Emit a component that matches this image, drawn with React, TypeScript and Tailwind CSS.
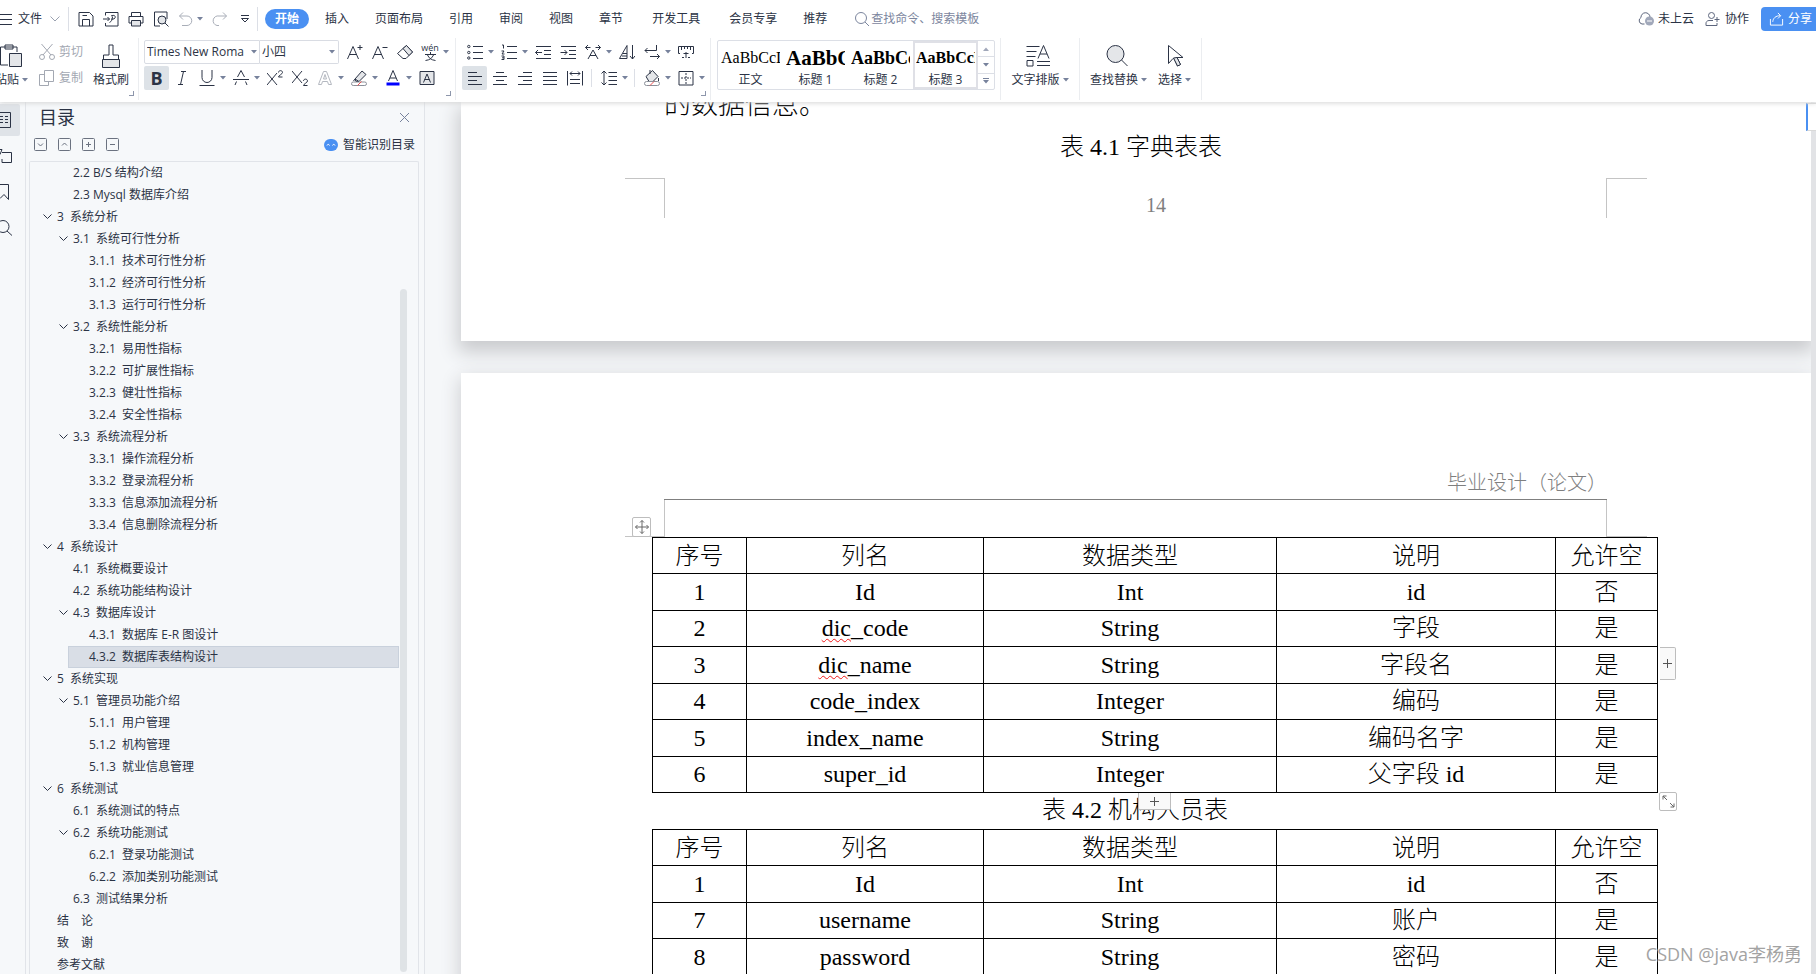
import type { ReactNode } from "react";
import clsx from "clsx";

type IconProps = { children: ReactNode; size?: string; box?: string; className?: string };

function Icon({ children, size = "size-4", box = "0 0 16 16", className }: IconProps) {
  return (
    <svg
      viewBox={box}
      fill="none"
      stroke="currentColor"
      strokeWidth="1"
      className={clsx("shrink-0", size, className)}
    >
      {children}
    </svg>
  );
}

function Caret() {
  return (
    <svg viewBox="0 0 6 4" className="w-[6px] h-[4px] shrink-0 fill-[#77829c]">
      <path d="M0 0h6L3 3.6z" />
    </svg>
  );
}

type ToolProps = { label: string; split?: boolean; active?: boolean; children: ReactNode };

function Tool({ label, split, active, children }: ToolProps) {
  return (
    <button
      aria-label={label}
      className={clsx(
        "h-6 flex items-center shrink-0 rounded-xs",
        split ? "w-[34px] pl-[5px] gap-[5px]" : "w-[25px] justify-center",
        active && "bg-[#dde2e7]"
      )}
    >
      {children}
      {split && <Caret />}
    </button>
  );
}

function Corner() {
  return (
    <span className="absolute right-1 bottom-1 size-[5px] border-r border-b border-[#8d96ab]" />
  );
}

const tabs = [
  { name: "插入" },
  { name: "页面布局" },
  { name: "引用" },
  { name: "审阅" },
  { name: "视图" },
  { name: "章节" },
  { name: "开发工具", wide: true },
  { name: "会员专享" },
  { name: "推荐" },
];

const styles = [
  { sample: "AaBbCcD", name: "正文", font: "text-base" },
  { sample: "AaBbC", name: "标题 1", font: "text-[21px] font-bold" },
  { sample: "AaBbCc", name: "标题 2", font: "text-lg font-bold" },
  { sample: "AaBbCcD", name: "标题 3", font: "text-base font-bold", selected: true },
];

const outline = [
  { level: 2, text: "2.2 B/S 结构介绍" },
  { level: 2, text: "2.3 Mysql 数据库介绍" },
  { level: 1, text: "3  系统分析", open: true },
  { level: 2, text: "3.1  系统可行性分析", open: true },
  { level: 3, text: "3.1.1  技术可行性分析" },
  { level: 3, text: "3.1.2  经济可行性分析" },
  { level: 3, text: "3.1.3  运行可行性分析" },
  { level: 2, text: "3.2  系统性能分析", open: true },
  { level: 3, text: "3.2.1  易用性指标" },
  { level: 3, text: "3.2.2  可扩展性指标" },
  { level: 3, text: "3.2.3  健壮性指标" },
  { level: 3, text: "3.2.4  安全性指标" },
  { level: 2, text: "3.3  系统流程分析", open: true },
  { level: 3, text: "3.3.1  操作流程分析" },
  { level: 3, text: "3.3.2  登录流程分析" },
  { level: 3, text: "3.3.3  信息添加流程分析" },
  { level: 3, text: "3.3.4  信息删除流程分析" },
  { level: 1, text: "4  系统设计", open: true },
  { level: 2, text: "4.1  系统概要设计" },
  { level: 2, text: "4.2  系统功能结构设计" },
  { level: 2, text: "4.3  数据库设计", open: true },
  { level: 3, text: "4.3.1  数据库 E-R 图设计" },
  { level: 3, text: "4.3.2  数据库表结构设计", selected: true },
  { level: 1, text: "5  系统实现", open: true },
  { level: 2, text: "5.1  管理员功能介绍", open: true },
  { level: 3, text: "5.1.1  用户管理" },
  { level: 3, text: "5.1.2  机构管理" },
  { level: 3, text: "5.1.3  就业信息管理" },
  { level: 1, text: "6  系统测试", open: true },
  { level: 2, text: "6.1  系统测试的特点" },
  { level: 2, text: "6.2  系统功能测试", open: true },
  { level: 3, text: "6.2.1  登录功能测试" },
  { level: 3, text: "6.2.2  添加类别功能测试" },
  { level: 2, text: "6.3  测试结果分析" },
  { level: 1, text: "结　论" },
  { level: 1, text: "致　谢" },
  { level: 1, text: "参考文献" },
];

const columns = ["序号", "列名", "数据类型", "说明", "允许空"];

const dictRows = [
  ["1", "Id", "Int", "id", "否"],
  ["2", "dic_code", "String", "字段", "是"],
  ["3", "dic_name", "String", "字段名", "是"],
  ["4", "code_index", "Integer", "编码", "是"],
  ["5", "index_name", "String", "编码名字", "是"],
  ["6", "super_id", "Integer", "父字段 id", "是"],
];

const userRows = [
  ["1", "Id", "Int", "id", "否"],
  ["7", "username", "String", "账户", "是"],
  ["8", "password", "String", "密码", "是"],
];

function TopBar() {
  return (
    <div className="flex items-center h-[38px] pb-1 pt-1">
      <button className="flex items-center h-6">
        <Icon size="w-3 h-4" box="0 0 12 16">
          <path d="M0 3.5h12M0 8.5h12M0 13.5h12" />
        </Icon>
        <span className="ml-[6px]">文件</span>
        <Icon size="w-[10px] h-[6px]" box="0 0 10 6" className="ml-2 text-[#9aa1b0]">
          <path d="M.5.5 5 5 9.5.5" />
        </Icon>
      </button>
      <span className="w-px h-6 bg-[#dcdfe6] ml-2" />
      <div className="flex items-center ml-[9px] gap-[9px]">
        <button aria-label="保存">
          <Icon>
            <path d="M1 1.500h10.500l3.500 3.500v10H1zM4.500 15V8.500h7V15M4.500 4.500H9" />
          </Icon>
        </button>
        <button aria-label="输出为PDF">
          <Icon>
            <path d="M2.500 4.500v-3h12.500v13.500H2.500v-3M0 8h6.500M4.500 6l2 2-2 2M8 5c3-1.500 5 0 4 2-1 1.500-3 1-4 1M9.500 5.500c0 3-1 5-3 6" />
          </Icon>
        </button>
        <button aria-label="打印">
          <Icon>
            <path d="M3.500 5V1.500h9V5M3.500 12H1V5.500h14V12h-2.500" />
            <path d="M3.500 9.500h9V15h-9z" fill="#e4e6e9" />
          </Icon>
        </button>
        <button aria-label="打印预览">
          <Icon>
            <path d="M7 15H1.500V1H14v7" />
            <circle cx="9" cy="9" r="4" fill="#e4e6e9" />
            <path d="m12 12 3.500 3.500" />
          </Icon>
        </button>
        <button aria-label="撤销" className="flex items-center gap-[3px] text-[#a9aeb8]">
          <Icon>
            <path d="M5 1.500 1.500 5 5 8.500M1.500 5H9a4.500 4.500 0 0 1 0 9.500H4" />
          </Icon>
          <Caret />
        </button>
        <button aria-label="恢复" className="text-[#a9aeb8]">
          <Icon>
            <path d="M11 1.500 14.500 5 11 8.500M14.500 5H7a4.500 4.500 0 0 0-2 9.500h2" />
          </Icon>
        </button>
        <button aria-label="自定义快速访问工具栏" className="ml-1">
          <Icon size="w-2 h-2" box="0 0 8 8">
            <path d="M0 .5h8M.5 3.500 4 7l3.500-3.500z" />
          </Icon>
        </button>
      </div>
      <span className="w-px h-6 bg-[#dcdfe6] ml-2" />
      <nav className="flex items-center ml-[7px]">
        <button className="h-5 px-[10px] mr-[3px] rounded-full bg-[#4a90f2] text-white font-bold">
          开始
        </button>
        {tabs.map((tab) => (
          <button key={tab.name} className={tab.wide ? "px-4" : "px-[13px]"}>
            {tab.name}
          </button>
        ))}
      </nav>
      <label className="flex items-center ml-[14px] gap-px text-[#7c869e]">
        <Icon>
          <circle cx="7" cy="7" r="5.500" />
          <path d="m11 11 4 4" />
        </Icon>
        <input
          placeholder="查找命令、搜索模板"
          className="w-32 outline-none placeholder:text-[#7c869e]"
        />
      </label>
      <div className="ml-auto flex items-center shrink-0">
        <button className="flex items-center gap-1">
          <Icon className="text-[#5d667d]">
            <path d="M6.500 13H4A3.500 3.500 0 0 1 3 6.500 4.500 4.500 0 0 1 12 6" />
            <circle cx="11.500" cy="10" r="4.500" fill="#a1a8ba" stroke="none" />
            <path d="M9 10h5" stroke="#fff" />
          </Icon>
          未上云
        </button>
        <button className="flex items-center gap-1 ml-[11px]">
          <Icon className="text-[#5d667d]">
            <circle cx="6.500" cy="4.500" r="3" />
            <path d="M8 9.500H4A3 3 0 0 0 1 13v1.500h11V12M9.500 8.500h5M12 6v5" />
          </Icon>
          协作
        </button>
        <button className="flex items-center gap-1 ml-3 h-6 pl-2 w-[55px] rounded-l bg-[#4a90f2] text-white">
          <Icon className="w-[15px]">
            <path d="M1.500 8v6.500h13V8M4 11c.5-4 3-6.500 8-6.500M9.500 1.500l3 3-3 3" />
          </Icon>
          <span className="whitespace-nowrap">分享</span>
        </button>
      </div>
    </div>
  );
}

function ClipboardGroup() {
  return (
    <div className="relative flex w-[139px] shrink-0">
      <button className="flex flex-col justify-between w-7 pt-1 pb-[2px]">
        <Icon size="w-[22px] h-6" box="0 0 22 24">
          <path d="M8 21H.5V3H17v5M5 1h8v4H5z" />
          <path d="M9.500 9.500h12v13h-12z" fill="#e4e6e9" />
        </Icon>
        <span className="flex items-center gap-[3px] -ml-[5px] whitespace-nowrap">
          粘贴
          <Caret />
        </span>
      </button>
      <div className="flex flex-col gap-[2px] ml-[11px] text-[#a3a8b2]">
        <button className="flex items-center gap-1 h-6">
          <Icon>
            <path d="M2.500 0 12 11M13.500 0 4 11" />
            <circle cx="3" cy="13" r="2.500" />
            <circle cx="13" cy="13" r="2.500" />
          </Icon>
          剪切
        </button>
        <button className="flex items-center gap-1 h-6">
          <Icon>
            <path d="M5.500.5h9v11h-9zM5.500 4.500h-5v11h9v-4" />
          </Icon>
          复制
        </button>
      </div>
      <button className="flex flex-col items-center justify-between ml-[10px] pt-1 pb-[2px]">
        <Icon size="w-5 h-6" box="0 0 20 24">
          <path d="M8 11V1h4v10h5.500v4.500h-15V11z" />
          <path d="M1.500 15.500h17v8h-17z" fill="#e4e6e9" />
        </Icon>
        格式刷
      </button>
      <Corner />
    </div>
  );
}

function FontGroup() {
  return (
    <div className="relative w-[317px] shrink-0 pl-[5px] flex flex-col gap-[2px]">
      <div className="flex">
        <label className="flex items-center w-[116px] h-6 border border-[#d9dce3] rounded-l-xs">
          <select aria-label="字体" className="appearance-none w-[106px] pl-[2px] outline-none">
            <option>Times New Roma</option>
          </select>
          <Caret />
        </label>
        <label className="flex items-center w-[79px] h-6 border border-l-0 border-[#d9dce3] rounded-r-xs">
          <select aria-label="字号" className="appearance-none w-[69px] pl-[2px] outline-none">
            <option>小四</option>
          </select>
          <Caret />
        </label>
        <div className="flex ml-[3px]">
          <Tool label="增大字号">
            <Icon>
              <path d="M.5 15 6 2.500 11.500 15M2.500 10.500h7M10.500 3.500h5M13 1v5" />
            </Icon>
          </Tool>
          <Tool label="减小字号">
            <Icon>
              <path d="M.5 15 6 2.500 11.500 15M2.500 10.500h7M10.500 3.500h5" />
            </Icon>
          </Tool>
          <Tool label="清除格式">
            <Icon>
              <path d="m6 4.500 3.500-3 6 6.500-6.500 6.500H6L.5 9.500z" />
              <path d="m6 4.500 3.500-3 6 6.500-3.500 3.500z" fill="#e4e6e9" />
            </Icon>
          </Tool>
          <Tool label="拼音指南" split>
            <span className="flex flex-col items-center w-4 shrink-0">
              <span className="text-[9px] leading-[9px]">wén</span>
              <Icon size="w-[11px] h-[9px]" box="0 0 11 9">
                <path d="M0 2.500h11M5.500 0v2.500M2.500 3C4 6 6 8 10.500 8.500M8.500 3C7 6 5 8 .5 8.500" />
              </Icon>
            </span>
          </Tool>
        </div>
      </div>
      <div className="flex">
        <Tool label="加粗" active>
          <span className="text-lg font-bold">B</span>
        </Tool>
        <Tool label="倾斜">
          <Icon>
            <path d="M7 1.500h5M4 14.500h5M9.500 1.500l-3 13" />
          </Icon>
        </Tool>
        <Tool label="下划线" split>
          <Icon>
            <path d="M3 0v7.500a5 5 0 0 0 10 0V0M.5 15.500h15" />
          </Icon>
        </Tool>
        <Tool label="删除线" split>
          <Icon>
            <path d="M4.500 7 8 .5 11.500 7M0 9.500h16M3.500 11.500 2 15M12.500 11.500 14 15" />
          </Icon>
        </Tool>
        <Tool label="上标">
          <Icon>
            <path d="M0 3l10 12M10 3 0 15M11.500 2.500c0-2.500 4-2.500 4 0 0 1.500-4 3-4 4.500h4" />
          </Icon>
        </Tool>
        <Tool label="下标">
          <Icon>
            <path d="M0 1l10 12M10 1 0 13M11.500 11c0-2.500 4-2.500 4 0 0 1.500-4 3-4 4.500h4" />
          </Icon>
        </Tool>
        <Tool label="文字效果" split>
          <Icon className="text-[#b4b8c0]">
            <path d="M1.500 14.500 6.500 1.500h3l5 13h-3l-1-3h-5l-1 3zM6.500 9h3L8 4.500z" />
          </Icon>
        </Tool>
        <Tool label="突出显示" split>
          <Icon>
            <path d="m4 9 7-8 4 3.500-7 7H5zM4 9l4 2.500M2.500 11l1.500-2" fill="#e4e6e9" />
            <rect x=".5" y="12" width="15" height="3.500" rx="1.700" stroke="#8b909a" />
            <path d="m6.500 15.500 4-4" stroke="#f05050" />
          </Icon>
        </Tool>
        <Tool label="字体颜色" split>
          <Icon>
            <path d="M3.500 11 8 .5 12.500 11M5 8h6" />
            <path d="M1.500 14h13" stroke="#0000ff" strokeWidth="3" />
          </Icon>
        </Tool>
        <Tool label="字符底纹">
          <Icon>
            <path d="M1 1.500h14v13H1z" fill="#e4e6e9" />
            <path d="M4.500 12.500 8 4l3.500 8.500M5.500 9.500h5" />
          </Icon>
        </Tool>
      </div>
      <Corner />
    </div>
  );
}

function ParagraphGroup() {
  return (
    <div className="relative w-[255px] shrink-0 pl-[6px] flex flex-col gap-[2px]">
      <div className="flex">
        <Tool label="项目符号" split>
          <Icon>
            <circle cx="1.800" cy="2.500" r="1.200" />
            <circle cx="1.800" cy="8.500" r="1.200" />
            <circle cx="1.800" cy="14" r="1.200" />
            <path d="M6 2.500h10M6 8.500h10M6 14.500h10" />
          </Icon>
        </Tool>
        <Tool label="编号" split>
          <Icon>
            <path d="M6 2.500h10M6 8.500h10M6 14.500h10M1 1h1.500v3.500M.5 7H3l-2 3h2.500M.5 12H3v3.500H.5M1 13.800h2" />
          </Icon>
        </Tool>
        <Tool label="减少缩进量">
          <Icon>
            <path d="M1 2.500h15M9 6.500h7M9 10.500h7M1 14.500h15M.5 8.500H7M3 6 .5 8.500 3 11" />
          </Icon>
        </Tool>
        <Tool label="增加缩进量">
          <Icon>
            <path d="M1 2.500h15M9 6.500h7M9 10.500h7M1 14.500h15M.5 8.500H7M4.500 6 7 8.500 4.500 11" />
          </Icon>
        </Tool>
        <Tool label="中文版式" split>
          <Icon>
            <path d="M3 15 8 6l5 9M5 11.500h6M.5 3.500h5M3 1 .5 3.500 3 6M10.500 3.500h5M13 1l2.500 2.500L13 6" />
          </Icon>
        </Tool>
        <Tool label="排序">
          <Icon>
            <path d="M.5 14.500 8 1.500v13zM4 9.500h4M3 12h5M13.500 1v14M11 12l2.500 3 2.500-3" />
          </Icon>
        </Tool>
        <Tool label="换行" split>
          <Icon>
            <path d="M12.500 1v5.500H1M3.500 4 1 6.500 3.500 9M6 12.500h9.500M13 10l2.500 2.500L13 15" />
          </Icon>
        </Tool>
        <Tool label="标尺">
          <Icon>
            <path d="M2 9.500H.5v-7h15v7H14M3.500 2.500V6M6.500 2.500V5M9.500 2.500V5M12.500 2.500V6M4 13.500h2M10 13.500h2M8 8v6M5.500 9.500h5" />
          </Icon>
        </Tool>
      </div>
      <div className="flex items-center">
        <Tool label="左对齐" active>
          <Icon>
            <path d="M1 2.500h9M1 6.500h14M1 10.500h9M1 14.500h14" />
          </Icon>
        </Tool>
        <Tool label="居中">
          <Icon>
            <path d="M4 2.500h8M1 6.500h14M4 10.500h8M1 14.500h14" />
          </Icon>
        </Tool>
        <Tool label="右对齐">
          <Icon>
            <path d="M6 2.500h9M1 6.500h14M6 10.500h9M1 14.500h14" />
          </Icon>
        </Tool>
        <Tool label="两端对齐">
          <Icon>
            <path d="M1 2.500h14M1 6.500h14M1 10.500h14M1 14.500h14" />
          </Icon>
        </Tool>
        <Tool label="分散对齐">
          <Icon>
            <path d="M.5 1v14.500M15.500 1v14.500M3 3.500h10M5 1.500l-2 2 2 2M11 1.500l2 2-2 2M3 9.500h10M3 13.500h10" />
          </Icon>
        </Tool>
        <span className="w-px h-[18px] mx-1 bg-[#dcdfe6]" />
        <Tool label="行距" split>
          <Icon>
            <path d="M3 1v14M.5 3.500 3 1l2.500 2.500M.5 12.500 3 15l2.500-2.500M7.500 2.500H16M7.500 6.500H16M7.500 10.500H16M7.500 14.500H16" />
          </Icon>
        </Tool>
        <span className="w-px h-[18px] mx-1 bg-[#dcdfe6]" />
        <Tool label="底纹颜色" split>
          <Icon>
            <path d="M2 6.500 8.500.5l5.500 6-5 5H5z" fill="#e4e6e9" />
            <path d="M6 4V0M14.500 8v3" />
            <rect x=".5" y="11.500" width="15" height="4" rx="2" stroke="#8b909a" fill="#fff" />
            <path d="m6 15.500 4-4" stroke="#f05050" />
          </Icon>
        </Tool>
        <Tool label="边框" split>
          <Icon>
            <path d="M1 1.500h14v13.500H1z" />
            <path d="M8 3v11M3 8h10" strokeDasharray="2 1" />
          </Icon>
        </Tool>
      </div>
      <Corner />
    </div>
  );
}

function Ribbon() {
  return (
    <div className="flex h-16 divide-x divide-[#ebedf0] pb-[2px] *:pt-[2px] *:pb-[10px]">
      <ClipboardGroup />
      <FontGroup />
      <ParagraphGroup />
      <div className="shrink-0 pl-[6px] pr-[5px]">
        <div className="flex h-[50px] border border-[#dcdfe6] rounded-xs">
          {styles.map((style) => (
            <button
              key={style.name}
              className={clsx(
                "flex flex-col w-[65px] border-2 px-px",
                style.selected ? "border-[#dfe0e6]" : "border-transparent"
              )}
            >
              <span
                className={clsx(
                  "h-[29px] leading-[30px] w-full text-left overflow-hidden text-black font-['Liberation_Serif']",
                  style.font
                )}
              >
                {style.sample}
              </span>
              <span className="w-full text-center leading-[15px]">{style.name}</span>
            </button>
          ))}
          <div className="flex flex-col w-4 divide-y divide-[#dcdfe6] *:flex-1 *:flex *:items-center *:justify-center">
            <button aria-label="上一行">
              <svg viewBox="0 0 6 4" className="w-[6px] h-[4px] fill-[#a1a8ba]">
                <path d="M0 4h6L3 .4z" />
              </svg>
            </button>
            <button aria-label="下一行">
              <Caret />
            </button>
            <button aria-label="更多样式" className="flex-col gap-px">
              <span className="w-[6px] h-px bg-[#77829c]" />
              <Caret />
            </button>
          </div>
        </div>
      </div>
      <div className="shrink-0 w-[79px] flex justify-center">
        <button className="flex flex-col items-center justify-between pt-1 pb-[2px]">
          <Icon size="size-6" box="0 0 24 24" className="-ml-1">
            <path d="M.5 2.500h13M.5 7.500h10M.5 12.500h9M12 14.500l5.500-13 5.500 13M14 10h7M1 16.500h6v5.500H1zM11 17.500h13M11 21.500h13" />
          </Icon>
          <span className="flex items-center gap-[3px]">
            文字排版
            <Caret />
          </span>
        </button>
      </div>
      <div className="shrink-0 flex gap-[11px] pl-[10px] pr-[10px]">
        <button className="flex flex-col items-center justify-between pt-1 pb-[2px]">
          <Icon size="size-6" box="0 0 24 24" className="-ml-1">
            <circle cx="10.500" cy="10" r="8.500" fill="#e4e6e9" />
            <path d="m16.500 16 6 6" />
          </Icon>
          <span className="flex items-center gap-[3px]">
            查找替换
            <Caret />
          </span>
        </button>
        <button className="flex flex-col items-center justify-between pt-1 pb-[2px]">
          <Icon size="size-6" box="0 0 24 24">
            <path d="M5.500 1.500v18l4.500-5h1l3.500 7.500 3-1.500-3.500-7H20z" />
            <path d="m10.500 14 4 8 3-1.500-3.500-7z" fill="#e4e6e9" />
          </Icon>
          <span className="flex items-center gap-[3px]">
            选择
            <Caret />
          </span>
        </button>
      </div>
      <div />
    </div>
  );
}

function Sidebar() {
  return (
    <aside className="flex shrink-0 w-[425px] border-r border-[#e1e4e9] bg-[#f6f8fa]">
      <div className="w-[26px] shrink-0 border-r border-[#e1e4e9] pt-[2px] flex flex-col gap-1 *:h-8 *:w-5 *:flex *:items-center">
        <button aria-label="目录" className="bg-[#dfe3e8] rounded-r-xs">
          <Icon size="w-[11px] h-4" box="0 0 11 16">
            <path d="M0 .5h10.500v15H0M0 4.500h3M0 7.500h3M0 10.500h3M5 4.500h3M5 7.500h3M5 10.500h3" />
          </Icon>
        </button>
        <button aria-label="章节">
          <Icon size="w-3 h-4" box="0 0 12 16">
            <path d="M0 1.500h2l-2 5M2 4.500h9.500v10H2V11" />
          </Icon>
        </button>
        <button aria-label="书签">
          <Icon size="w-[10px] h-[18px]" box="0 0 10 18">
            <path d="M0 1.500h8.500v15L4 11.500l-4 4" />
          </Icon>
        </button>
        <button aria-label="查找">
          <Icon size="w-3 h-4" box="0 0 12 16">
            <circle cx="3" cy="6.500" r="6" />
            <path d="m7 11 5 4.500" />
          </Icon>
        </button>
      </div>
      <div className="flex-1 min-w-0 flex flex-col pl-[3px] pr-[5px]">
        <div className="flex items-center justify-between h-[30px] pl-[10px] pr-[10px]">
          <h2 className="text-lg">目录</h2>
          <button aria-label="关闭">
            <Icon size="size-[9px]" box="0 0 9 9" className="text-[#77829c]">
              <path d="m0 0 9 9M9 0 0 9" />
            </Icon>
          </button>
        </div>
        <div className="flex items-center h-[29px] pl-[5px] pr-1 pb-1 gap-[11px] text-[#6b7280]">
          {["M4 5.500 6.500 8 9 5.500", "M4 7.500 6.500 5 9 7.500", "M6.500 4v5M4 6.500h5", "M4 6.500h5"].map(
            (path, index) => (
              <button key={path} aria-label={["展开", "收起", "新增", "删除"][index]}>
                <Icon size="size-[13px]" box="0 0 13 13">
                  <rect x=".5" y=".5" width="12" height="12" rx="1" />
                  <path d={path} />
                </Icon>
              </button>
            )
          )}
          <a href="#" className="flex items-center gap-[5px] ml-auto text-[#2b3345]">
            <Icon size="w-[14px] h-3" box="0 0 14 12">
              <rect width="14" height="12" rx="6" fill="#4a90f2" stroke="none" />
              <path d="M3 6.500c.5-1.500 2-1.500 2.500 0M8.500 6.500c.5-1.500 2-1.500 2.500 0" stroke="#fff" />
            </Icon>
            智能识别目录
          </a>
        </div>
        <div className="flex-1 min-h-0 flex border border-b-0 border-[#e1e4e9] rounded-t-xs">
          <ul className="flex-1 overflow-hidden">
            {outline.map((item) => (
              <li
                key={item.text}
                className={clsx(
                  "flex items-center h-[22px] whitespace-pre",
                  item.level === 1 && "pl-[13px]",
                  item.level === 2 && "pl-[29px]",
                  item.level === 3 && !item.selected && "pl-[45px]",
                  item.selected && "ml-[38px] pl-[6px] border border-[#c9d1dc] bg-[#d9dee6]"
                )}
              >
                <span className="w-[14px] shrink-0">
                  {item.open && (
                    <Icon size="w-[9px] h-[6px]" box="0 0 9 6">
                      <path d="M.5.5l4 4 4-4" />
                    </Icon>
                  )}
                </span>
                {item.text}
              </li>
            ))}
          </ul>
          <div className="w-[19px] pt-[127px] pb-[2px] pl-px">
            <div className="w-[7px] h-full rounded-full bg-[#dfe3e6]" />
          </div>
        </div>
      </div>
    </aside>
  );
}

function CellText({ text }: { text: string }) {
  if (!text.startsWith("dic_")) return <>{text}</>;
  return (
    <>
      <span className="underline decoration-wavy decoration-[#f01818] decoration-1 underline-offset-2">
        dic
      </span>
      {text.slice(3)}
    </>
  );
}

function DataTable({ rows, height }: { rows: string[][]; height: string }) {
  return (
    <table
      className={clsx("w-full table-fixed border-collapse text-center leading-[30px]", height)}
    >
      <colgroup>
        <col className="w-[94px]" />
        <col className="w-[237px]" />
        <col />
        <col className="w-[279px]" />
        <col className="w-[102px]" />
      </colgroup>
      <thead>
        <tr className="h-9">
          {columns.map((column) => (
            <th key={column} className="border border-black p-0 font-light">
              {column}
            </th>
          ))}
        </tr>
      </thead>
      <tbody>
        {rows.map((row) => (
          <tr key={row[0]}>
            {row.map((cell, index) => (
              <td key={index} className="border border-black p-0">
                <CellText text={cell} />
              </td>
            ))}
          </tr>
        ))}
      </tbody>
    </table>
  );
}

function Document() {
  return (
    <main className="relative flex-1 min-w-0 overflow-hidden bg-[#f5f7f9] pl-9 pr-[5px] text-2xl font-light text-black font-['Liberation_Serif','Noto_Sans_CJK_SC',serif]">
      <section className="h-[239px] bg-white shadow-[0_8px_18px_3px_#c9cacd]">
        <p className="h-7 pl-[203px] text-[27px] leading-[6px] overflow-hidden">的数据信息。</p>
        <p className="h-12 pl-[10px] leading-[35px] text-center">表 4.1 字典表表</p>
        <div className="flex justify-between items-start px-[164px] text-center">
          <span className="w-10 h-10 border-t border-r border-[#c4c4c4]" />
          <span className="pt-[13px] pl-[41px] text-xl leading-[28px] text-[#7f7f7f]">14</span>
          <span className="w-[41px] h-10 border-t border-l border-[#c4c4c4]" />
        </div>
      </section>

      <section className="mt-8 bg-white min-h-full pt-24 shadow-[0_6px_18px_1px_#cdced1]">
        <header className="ml-[203px] mr-[204px] pb-[2px] border-b border-[#7f7f7f] text-right text-xl leading-[28px] text-[#7f7f7f]">
          毕业设计（论文）
        </header>
        <div className="flex justify-between px-[164px]">
          <span className="w-10 h-[37px] border-b border-r border-[#c4c4c4]" />
          <span className="w-[41px] h-[37px] border-b border-l border-[#c4c4c4]" />
        </div>
        <div className="ml-[191px] mr-[153px]">
          <div className="relative">
            <DataTable rows={dictRows} height="h-[256px]" />
            <button
              aria-label="移动表格"
              className="absolute -left-5 -top-5 w-[19px] h-5 flex items-center justify-center bg-white border border-[#bdbdbd] rounded-xs text-[#666]"
            >
              <Icon size="size-[14px]" box="0 0 14 14">
                <path d="M7 .5v13M.5 7h13M5 2.500l2-2 2 2M5 11.500l2 2 2-2M2.500 5l-2 2 2 2M11.500 5l2 2-2 2" />
              </Icon>
            </button>
            <button
              aria-label="添加列"
              className="absolute -right-[18px] top-[110px] w-4 h-[33px] flex items-center justify-center bg-[#f9f9f9] border border-l-0 border-[#bdbdbd] rounded-r-xs text-[#555]"
            >
              <Icon size="size-[9px]" box="0 0 9 9">
                <path d="M4.500 0v9M0 4.500h9" />
              </Icon>
            </button>
            <button
              aria-label="添加行"
              className="absolute left-[486px] top-full w-[33px] h-[17px] flex items-center justify-center bg-[#f9f9f9] border border-t-0 border-[#bdbdbd] rounded-b-xs text-[#555]"
            >
              <Icon size="size-[9px]" box="0 0 9 9">
                <path d="M4.500 0v9M0 4.500h9" />
              </Icon>
            </button>
            <button
              aria-label="缩放表格"
              className="absolute -right-[19px] top-[255px] w-[18px] h-[19px] flex items-center justify-center bg-white border border-[#bdbdbd] rounded-xs text-[#666]"
            >
              <Icon size="size-[13px]" box="0 0 13 13">
                <path d="M1 4.500V1h3.500M1 1l4 4M12 8.500V12H8.500M12 12 8 8" />
              </Icon>
            </button>
          </div>
          <p className="h-9 leading-[35px] pr-10 text-center">表 4.2 机构人员表</p>
          <DataTable rows={userRows} height="h-[147px]" />
        </div>
      </section>

      <div className="absolute right-0 top-[29px] bottom-0 w-[5px] bg-[#e2e3e6]" />
      <div className="absolute right-0 top-px w-[10px] h-7 bg-white border-l-2 border-l-[#4a90f2] border-y border-y-[#d9d9d9]" />
      <p className="absolute right-[14px] bottom-[6px] text-lg leading-[28px] font-normal text-[#a3a3a3] font-['Open_Sans','Noto_Sans_CJK_SC',sans-serif] [text-shadow:0_0_2px_#fff,1px_1px_1px_#fff]">
        CSDN @java李杨勇
      </p>
    </main>
  );
}

function App() {
  return (
    <div className="h-screen flex flex-col overflow-hidden bg-white text-xs text-[#2b3345] font-['Open_Sans','Noto_Sans_CJK_SC',sans-serif]">
      <header className="relative z-10 shrink-0 bg-white shadow-[0_1px_5px_#d5d5d5]">
        <TopBar />
        <Ribbon />
      </header>
      <div className="flex flex-1 min-h-0">
        <Sidebar />
        <Document />
      </div>
    </div>
  );
}

export default App;
